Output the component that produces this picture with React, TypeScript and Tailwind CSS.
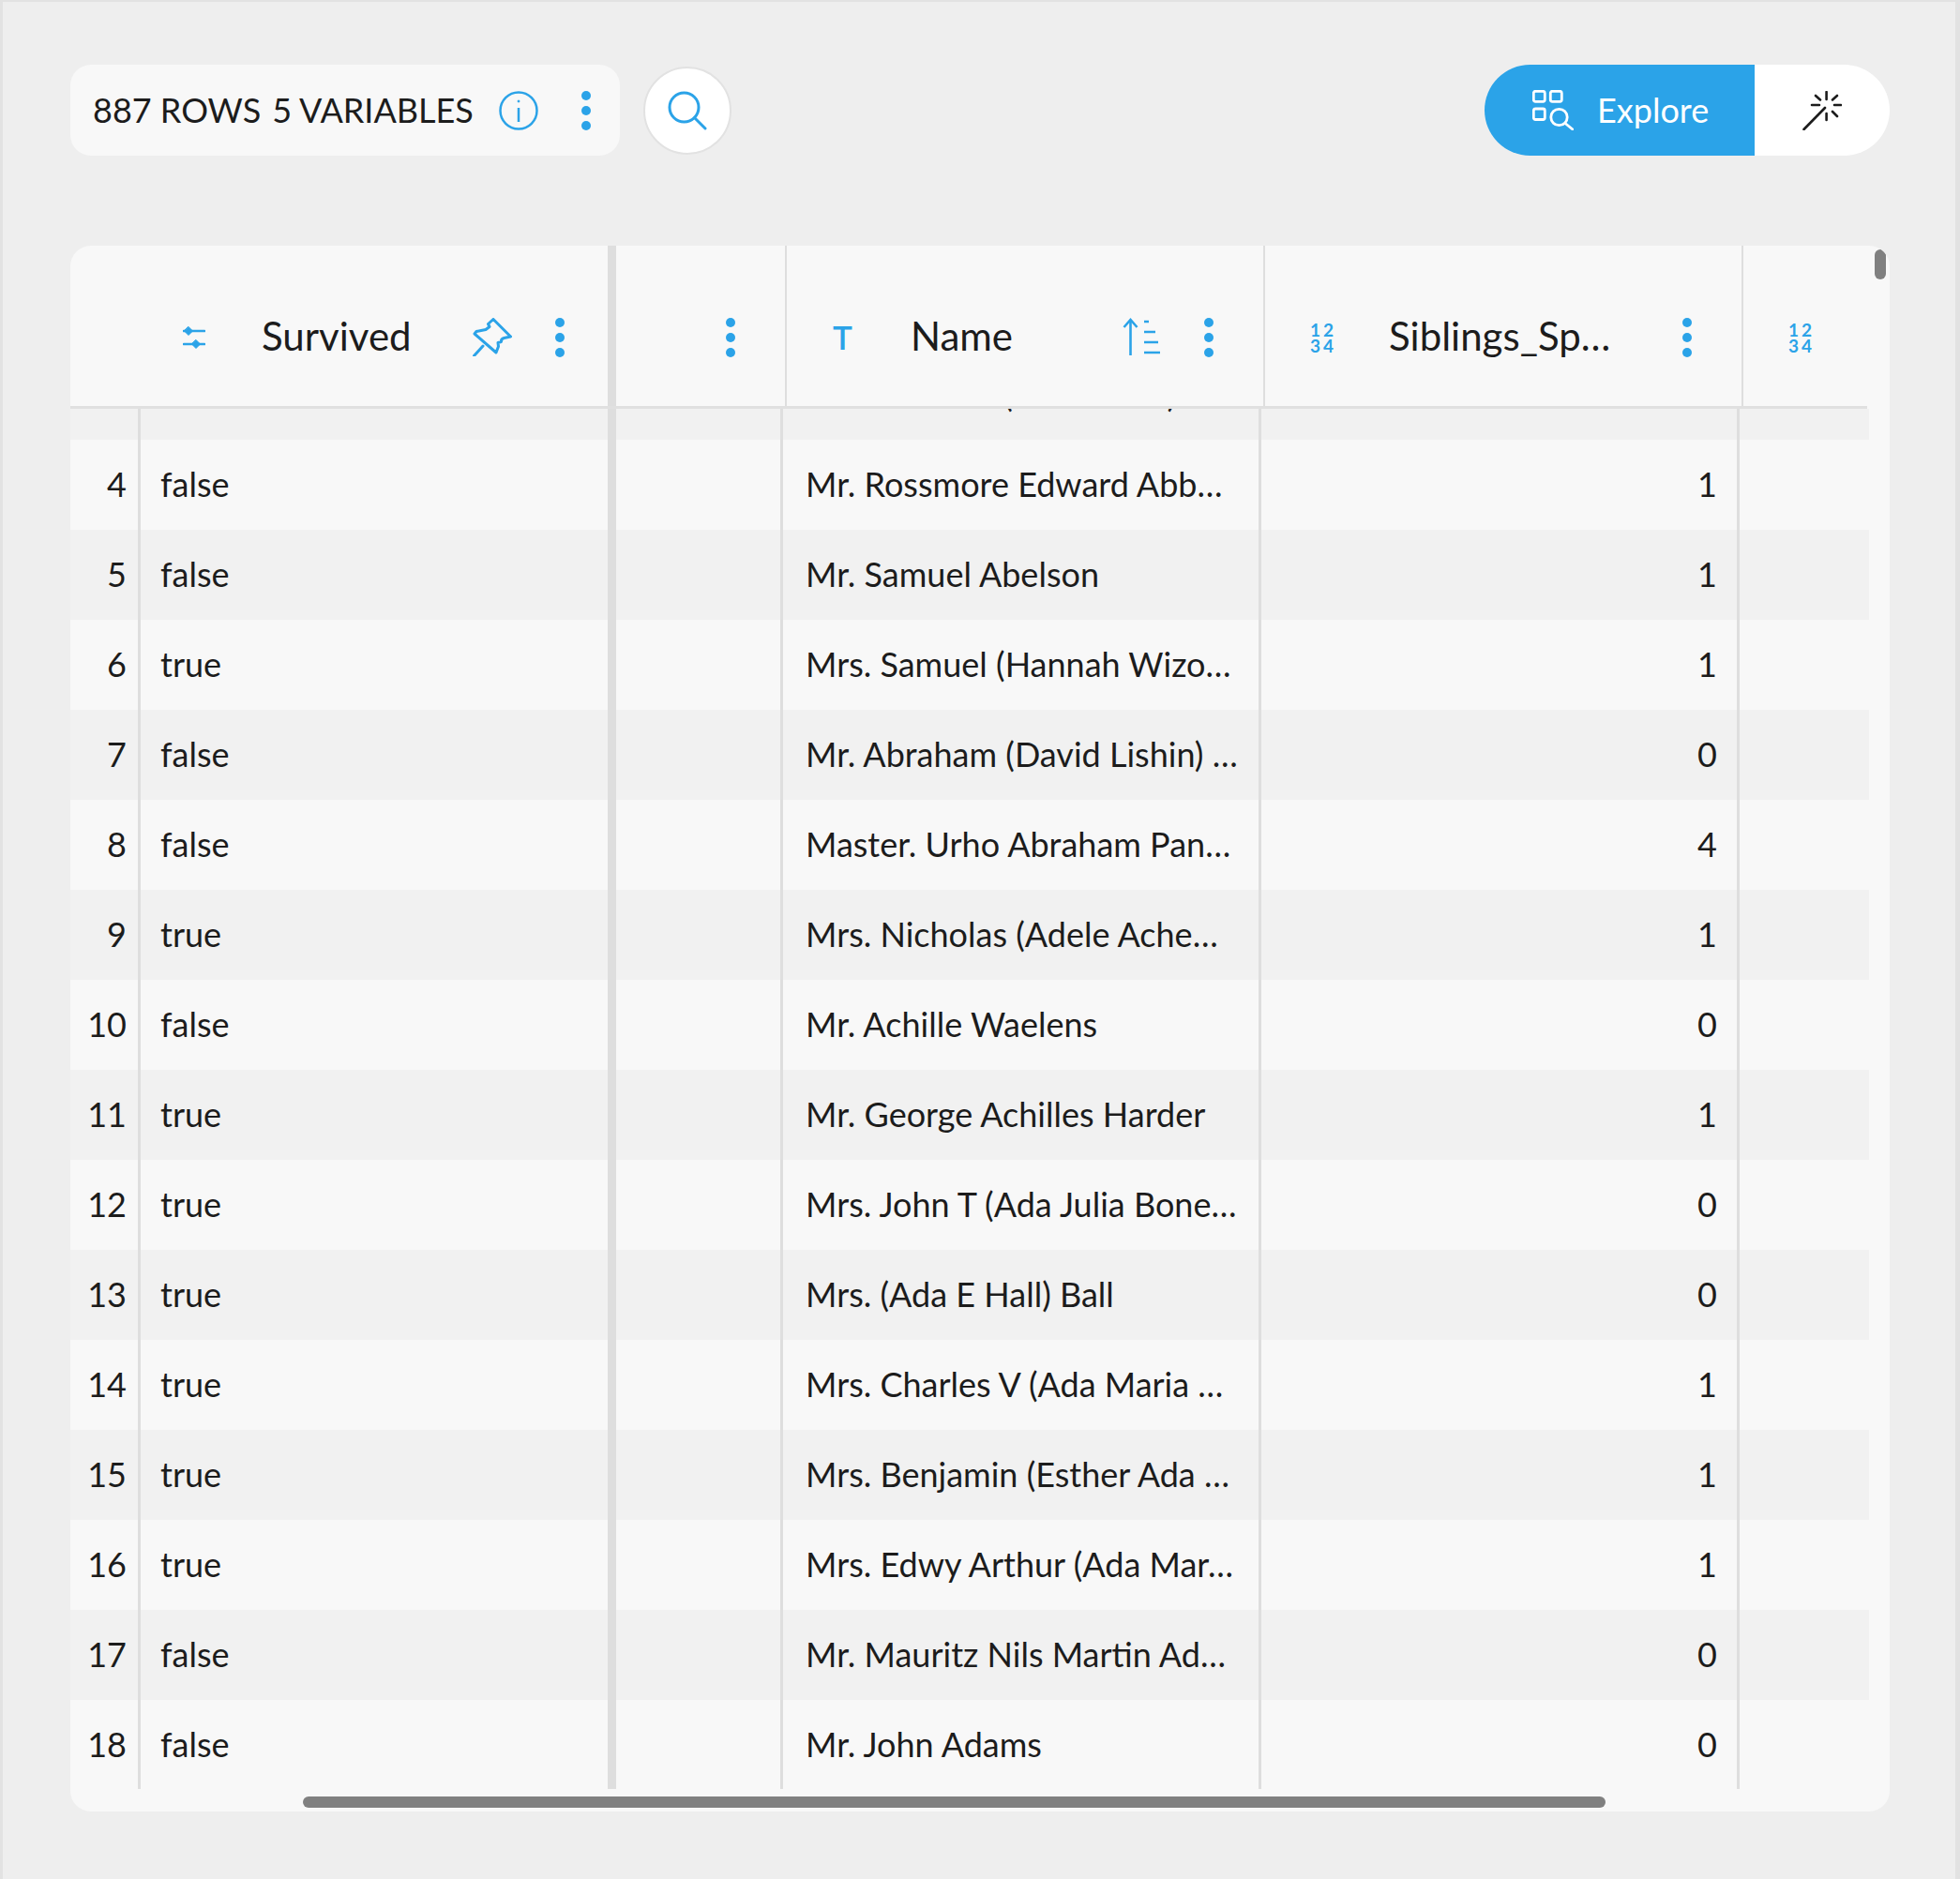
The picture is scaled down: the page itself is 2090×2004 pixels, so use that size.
const rows = [
  { id: 3, survived: "true", name: "Mrs. Stanton (Rosa Hunt) Abbott", sib: "1" },
  { id: 4, survived: "false", name: "Mr. Rossmore Edward Abb…", sib: "1" },
  { id: 5, survived: "false", name: "Mr. Samuel Abelson", sib: "1" },
  { id: 6, survived: "true", name: "Mrs. Samuel (Hannah Wizo…", sib: "1" },
  { id: 7, survived: "false", name: "Mr. Abraham (David Lishin) …", sib: "0" },
  { id: 8, survived: "false", name: "Master. Urho Abraham Pan…", sib: "4" },
  { id: 9, survived: "true", name: "Mrs. Nicholas (Adele Ache…", sib: "1" },
  { id: 10, survived: "false", name: "Mr. Achille Waelens", sib: "0" },
  { id: 11, survived: "true", name: "Mr. George Achilles Harder", sib: "1" },
  { id: 12, survived: "true", name: "Mrs. John T (Ada Julia Bone…", sib: "0" },
  { id: 13, survived: "true", name: "Mrs. (Ada E Hall) Ball", sib: "0" },
  { id: 14, survived: "true", name: "Mrs. Charles V (Ada Maria …", sib: "1" },
  { id: 15, survived: "true", name: "Mrs. Benjamin (Esther Ada …", sib: "1" },
  { id: 16, survived: "true", name: "Mrs. Edwy Arthur (Ada Mar…", sib: "1" },
  { id: 17, survived: "false", name: "Mr. Mauritz Nils Martin Ad…", sib: "0" },
  { id: 18, survived: "false", name: "Mr. John Adams", sib: "0" },
];

const Dots = () => (
  <div className="flex flex-col gap-[6px] shrink-0">
    <span className="w-[10px] h-[10px] rounded-full bg-[#2ba3e8]" />
    <span className="w-[10px] h-[10px] rounded-full bg-[#2ba3e8]" />
    <span className="w-[10px] h-[10px] rounded-full bg-[#2ba3e8]" />
  </div>
);

const NumberIcon = () => (
  <div className="w-[25px] shrink-0 whitespace-pre-line text-[19px] leading-[17px] font-bold tracking-[3px] text-[#2ba3e8]">
    {"12\n34"}
  </div>
);

const App = () => {
  return (
    <div className="w-[2090px] h-[2004px] box-border bg-[#eeeeee] border-l-[3px] border-t-2 border-r-[5px] border-[#e2e2e2] pl-[72px] pr-[70px] pt-[67px] font-[Lato,sans-serif] text-[#1c1c1c] overflow-hidden">
      {/* Toolbar */}
      <div className="flex items-center justify-between h-[97px]">
        <div className="flex items-center gap-[25px]">
          <div className="flex items-center w-[586px] h-[97px] bg-[#f8f8f8] rounded-[22px] pl-[24px] pr-[31px] text-[36px]">
            <span className="flex gap-[12px] pb-[2px] whitespace-nowrap">
              <span>887 ROWS</span>
              <span>5 VARIABLES</span>
            </span>
            <svg width="42" height="42" viewBox="0 0 42 42" fill="none" stroke="#2ba3e8" strokeWidth="2.5" className="ml-auto">
              <circle cx="21" cy="21" r="19.5" />
              <path d="M21 18v15" />
              <circle cx="21" cy="11" r="1" fill="#2ba3e8" strokeWidth="1" />
            </svg>
            <div className="ml-[46px]">
              <Dots />
            </div>
          </div>
          <div className="flex items-center justify-center w-[94px] h-[94px] rounded-full bg-white border-2 border-[#e2e2e2]">
            <svg width="42" height="42" viewBox="0 0 42 42" fill="none" stroke="#2ba3e8" strokeWidth="3" strokeLinecap="round">
              <circle cx="17.5" cy="17.5" r="15.5" />
              <path d="M28.5 28.5L40 40" />
            </svg>
          </div>
        </div>
        <div className="flex h-[97px]">
          <div className="flex items-center w-[288px] bg-[#2ba3e8] rounded-l-[49px] pl-[51px] text-white text-[36px]">
            <svg width="44" height="43" viewBox="0 0 44 43" fill="none" stroke="white" strokeWidth="2.8" strokeLinecap="round">
              <rect x="1.3" y="1.3" width="12" height="11" rx="2" />
              <rect x="19.3" y="1.3" width="12" height="11" rx="2" />
              <rect x="1.3" y="20" width="12" height="11.5" rx="2" />
              <circle cx="28.5" cy="29" r="8.7" />
              <path d="M35 35.5L43 42" />
            </svg>
            <span className="ml-[25px] pb-[2px]">Explore</span>
          </div>
          <div className="flex items-center justify-center w-[144px] bg-white rounded-r-[49px]">
            <svg width="42" height="42" viewBox="0 0 42 42" fill="none" stroke="#1c1c1c" strokeWidth="2.6" strokeLinecap="round">
              <path d="M1.5 41L24 18" />
              <path d="M25.6 1V9M25.6 24V31M10 15H18M34 15H41M14 5L19 9.5M37 5L32 9.5M32 22L37 27" />
            </svg>
          </div>
        </div>
      </div>

      {/* Table */}
      <div className="relative mt-[96px] h-[1670px] bg-[#f8f8f8] rounded-[22px] overflow-hidden">
        {/* Header */}
        <div className="flex h-[174px] w-[1916px] border-b-[3px] border-[#e0e0e0] text-[42px]">
          <div className="flex items-center w-[573px] pt-[24px] pl-[120px] pr-[46px]">
            <svg width="24" height="24" viewBox="0 0 24 24" fill="none" stroke="#2ba3e8" strokeWidth="2.6" strokeLinecap="round" className="shrink-0">
              <path d="M1 5H23M1 19H23" />
              <path d="M6 0.5L10.5 5L6 9.5L1.5 5Z" fill="#2ba3e8" strokeWidth="1" />
              <path d="M14 14.5L18.5 19L14 23.5L9.5 19Z" fill="#2ba3e8" strokeWidth="1" />
            </svg>
            <span className="ml-[60px] pb-[2px]">Survived</span>
            <svg width="42" height="41" viewBox="0 0 42 41" fill="none" stroke="#2ba3e8" strokeWidth="3" strokeLinejoin="round" strokeLinecap="round" className="ml-auto mr-[46px] shrink-0">
              <path d="M22 1.5L40.5 20L33.5 21.5Q30 22.5 30.5 25.5L27 26.5L27.5 30.5L25 37L2 17L4 14.5L14 12.5L18 9.5L16.5 6.5Z" />
              <path d="M1.5 40.5L11 30" />
            </svg>
            <Dots />
          </div>
          <div className="w-[9px] bg-[#dedede]" />
          <div className="flex items-center justify-end w-[182px] pt-[24px] pr-[53px] border-r-2 border-[#dedede]">
            <Dots />
          </div>
          <div className="flex items-center w-[510px] pt-[24px] pl-[49px] pr-[53px] border-r-2 border-[#dedede]">
            <span className="w-[20px] shrink-0 text-center text-[35px] font-semibold text-[#2ba3e8]">T</span>
            <span className="ml-[63px] pb-[2px]">Name</span>
            <svg width="41" height="41" viewBox="0 0 41 41" fill="none" stroke="#2ba3e8" strokeWidth="2.6" className="ml-auto mr-[46px] shrink-0">
              <path d="M8.5 2V40" />
              <path d="M1.5 10L8.5 2L15.5 10" />
              <path d="M23 4H28M23 15H35M23 26H38M23 37H40" />
            </svg>
            <Dots />
          </div>
          <div className="flex items-center w-[510px] pt-[24px] pl-[48px] pr-[53px] border-r-2 border-[#dedede]">
            <NumberIcon />
            <span className="ml-[59px] pb-[2px]">Siblings_Sp…</span>
            <div className="ml-auto">
              <Dots />
            </div>
          </div>
          <div className="flex items-center flex-1 pt-[24px] pl-[48px]">
            <NumberIcon />
          </div>
        </div>

        {/* Rows, scrolled so that row 3 is cut off by the header */}
        <div className="h-[1472px] w-[1918px] overflow-hidden text-[36px]">
          <div className="-mt-[63px]">
            {rows.map((row, i) => (
              <div key={row.id} className={`flex h-[96px] ${i % 2 === 0 ? "bg-[#f1f1f1]" : "bg-[#f8f8f8]"}`}>
                <div className="flex items-center justify-end w-[75px] pb-[2px] pr-[12px] border-r-[3px] border-[#dedede]">
                  {row.id}
                </div>
                <div className="flex items-center w-[498px] pb-[2px] pl-[21px]">{row.survived}</div>
                <div className="w-[9px] bg-[#dedede]" />
                <div className="w-[178px] border-r-[3px] border-[#dedede]" />
                <div className="flex items-center w-[510px] pb-[2px] pl-[24px] whitespace-nowrap border-r-[3px] border-[#dedede]">
                  {row.name}
                </div>
                <div className="flex items-center justify-end w-[510px] pb-[2px] pr-[21px] border-r-[3px] border-[#dedede]">
                  {row.sib}
                </div>
                <div className="flex-1" />
              </div>
            ))}
          </div>
        </div>

        {/* Scrollbars */}
        <div className="absolute left-[1924px] top-[4px] w-[12px] h-[32px] rounded-full bg-[#808080]" />
        <div className="absolute left-[248px] bottom-[4px] w-[1389px] h-[12px] rounded-full bg-[#808080]" />
      </div>
    </div>
  );
};

export default App;
